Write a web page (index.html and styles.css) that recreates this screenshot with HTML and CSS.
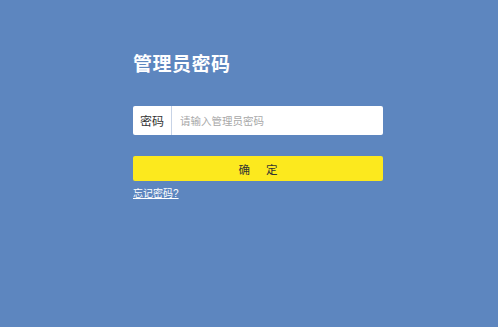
FILE: index.html
```html
<!DOCTYPE html>
<html lang="zh">
<head>
<meta charset="utf-8">
<link rel="stylesheet" href="styles.css">
</head>
<body>
<div class="page">
  <div class="panel">
    <h1 class="title">管理员密码</h1>
    <div class="field">
      <span class="label">密码</span>
      <input class="input" type="password" placeholder="请输入管理员密码">
    </div>
    <button class="btn">确&nbsp;&nbsp;&nbsp;&nbsp;&nbsp;定</button>
    <a class="link" href="#">忘记密码?</a>
  </div>
</div>
</body>
</html>
```
FILE: styles.css
```css
html, body {
  margin: 0;
  padding: 0;
  width: 100%;
  height: 100%;
  background: #5d86bf;
  font-family: "Liberation Sans", "Noto Sans CJK SC", sans-serif;
}
.page {
  display: flex;
  justify-content: flex-start;
  padding-left: 133px;
  padding-top: 52px;
}
.panel {
  width: 250px;
  display: flex;
  flex-direction: column;
}
.title {
  margin: 0;
  font-size: 19px;
  line-height: 26px;
  font-weight: bold;
  color: #ffffff;
  letter-spacing: 0.5px;
}
.field {
  margin-top: 28px;
  height: 29px;
  display: flex;
  background: #ffffff;
  border-radius: 2px;
  box-sizing: border-box;
}
.label {
  width: 38px;
  flex: none;
  border-right: 1px solid #c7d3e6;
  font-size: 12px;
  color: #333333;
  display: flex;
  align-items: center;
  justify-content: center;
}
.input {
  flex: 1;
  border: none;
  outline: none;
  background: transparent;
  padding: 0 0 0 8px;
  font-family: "Liberation Sans", "Noto Sans CJK SC", sans-serif;
  font-size: 10.5px;
  color: #333;
}
.input::placeholder {
  color: #a8a8a8;
}
.btn {
  margin-top: 21px;
  height: 25px;
  border: none;
  border-radius: 2px;
  background: #fce91e;
  color: #333333;
  font-family: "Liberation Sans", "Noto Sans CJK SC", sans-serif;
  font-size: 11.5px;
  padding: 0;
}
.link {
  margin-top: 6px;
  align-self: flex-start;
  font-size: 10px;
  line-height: 14px;
  color: #ffffff;
  text-decoration: underline;
}
```
